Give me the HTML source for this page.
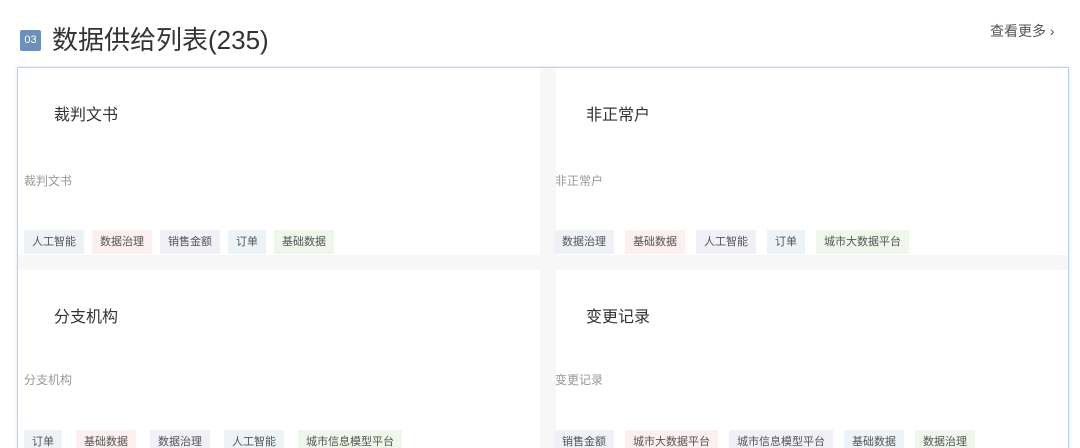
<!DOCTYPE html>
<html><head><meta charset="utf-8"><style>
*{margin:0;padding:0;box-sizing:border-box}
html,body{width:1080px;height:448px;overflow:hidden}
body{background:#fff;font-family:"Liberation Sans","Noto Sans CJK SC",sans-serif;position:relative}
.ic{position:absolute;left:20px;top:30px;width:21px;height:21px;background:#6d8fba;color:#fff;font-size:11px;line-height:21px;text-align:center;border-radius:2px}
.h{position:absolute;left:52px;top:23px;font-size:26px;color:#333;line-height:34px}
.more{position:absolute;left:990px;top:21px;font-size:14px;color:#555}
.box{position:absolute;left:17px;top:67px;width:1052px;height:400px;border:1px solid #b8d3f0;box-shadow:0 0 3px #cfe2f5;background:#f7f7f8}
.card{position:absolute;background:#fff}
.t{position:absolute;font-size:16px;color:#333}
.s{position:absolute;font-size:12px;color:#999}
.tags{position:absolute;display:flex;gap:8px}
.tags span{font-size:11px;color:#555;height:24px;line-height:24px;padding:0 8px}
.a{background:#eef2f7}.b{background:#fbefef}.c{background:#f1f0f8}.d{background:#edf4f8}.e{background:#eff7ea}
</style></head><body>
<div class="ic">03</div>
<div class="h">数据供给列表(235)</div>
<div class="more">查看更多 ›</div>
<div class="box">
 <div class="card" style="left:0;top:0;width:522px;height:187px">
  <div class="t" style="left:36px;top:33px">裁判文书</div>
  <div class="s" style="left:6px;top:104px">裁判文书</div>
  <div class="tags" style="left:6px;top:162px"><span class="a">人工智能</span><span class="b">数据治理</span><span class="c">销售金额</span><span class="d">订单</span><span class="e">基础数据</span></div>
 </div>
 <div class="card" style="left:538px;top:0;width:512px;height:187px">
  <div class="t" style="left:30px;top:33px">非正常户</div>
  <div class="s" style="left:-1px;top:104px">非正常户</div>
  <div class="tags" style="left:-2px;top:162px;gap:11px"><span class="a">数据治理</span><span class="b">基础数据</span><span class="c">人工智能</span><span class="d">订单</span><span class="e">城市大数据平台</span></div>
 </div>
 <div class="card" style="left:0;top:202px;width:522px;height:200px">
  <div class="t" style="left:36px;top:33px">分支机构</div>
  <div class="s" style="left:6px;top:101px">分支机构</div>
  <div class="tags" style="left:6px;top:160px;gap:14px"><span class="a">订单</span><span class="b">基础数据</span><span class="c">数据治理</span><span class="d">人工智能</span><span class="e">城市信息模型平台</span></div>
 </div>
 <div class="card" style="left:538px;top:202px;width:512px;height:200px">
  <div class="t" style="left:30px;top:33px">变更记录</div>
  <div class="s" style="left:-1px;top:101px">变更记录</div>
  <div class="tags" style="left:-2px;top:160px;gap:11px"><span class="a">销售金额</span><span class="b">城市大数据平台</span><span class="c">城市信息模型平台</span><span class="d">基础数据</span><span class="e">数据治理</span></div>
 </div>
</div>
</body></html>
